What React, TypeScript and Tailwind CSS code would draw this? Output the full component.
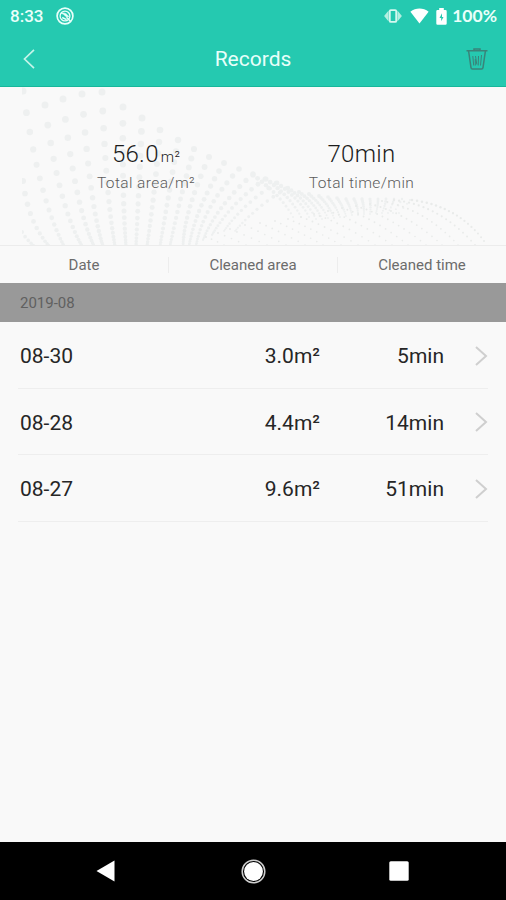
import { Fragment } from 'react';

interface CleaningRecord {
  date: string;
  area: string;
  time: string;
}

const RECORDS: CleaningRecord[] = [
  { date: '08-30', area: '3.0m²', time: '5min' },
  { date: '08-28', area: '4.4m²', time: '14min' },
  { date: '08-27', area: '9.6m²', time: '51min' },
];

// x0, y0, control x, control y, x1, y1, dot count, first radius, last radius
type Strand = [number, number, number, number, number, number, number, number, number];

const STRANDS: Strand[] = [
  [22, 145, 26, 152, 34, 159, 6, 2, 1.5],
  [23, 94, 28, 135, 49, 159, 12, 3, 1.4],
  [23, 4, 39, 112, 64, 159, 18, 3.5, 1.4],
  [45, 18, 58, 118, 82, 159, 18, 3.5, 1.4],
  [63, 12, 75, 120, 94, 159, 19, 3.5, 1.4],
  [82, 7, 90, 120, 103, 159, 20, 3.5, 1.4],
  [102, 5, 106, 110, 115, 159, 20, 3.5, 1.4],
  [123, 20, 122, 110, 126, 159, 20, 3.5, 1.4],
  [142, 31, 139, 100, 136, 159, 19, 3.5, 1.4],
  [160, 43, 155, 105, 147, 159, 19, 3.3, 1.4],
  [178, 53, 168, 112, 160, 159, 19, 3.2, 1.3],
  [194, 62, 180, 110, 170, 159, 19, 3.1, 1.2],
  [209, 70, 184, 125, 183, 159, 20, 3, 1.1],
  [224, 76, 196, 120, 189, 159, 20, 2.9, 1],
  [239, 82, 203, 120, 196, 159, 20, 2.8, 0.9],
  [253, 87, 216, 120, 203, 153, 19, 2.7, 0.9],
  [265, 92, 230, 117, 212, 148, 18, 2.5, 0.9],
  [276, 96, 243, 117, 224, 144, 16, 2.3, 0.8],
  [287, 101, 258, 118, 235, 144, 15, 2.1, 0.8],
];

const RIDGE: Strand[] = [
  [253, 88, 281, 108, 293, 130, 13, 2.6, 1],
  [266, 92, 291, 110, 301, 130, 13, 2.5, 1],
  [277, 96, 300, 112, 309, 130, 12, 2.4, 1],
  [288, 101, 307, 114, 316, 132, 12, 2.2, 1],
  [299, 105, 315, 116, 322, 132, 12, 2.1, 1],
  [309, 107, 321, 117, 328, 131, 11, 2, 0.9],
  [319, 109, 329, 118, 334, 131, 11, 1.9, 0.9],
  [328, 110, 336, 119, 340, 130, 10, 1.8, 0.9],
  [337, 111, 343, 119, 346, 129, 10, 1.8, 0.9],
  [346, 112, 350, 119, 352, 128, 9, 1.7, 0.9],
  [354, 112, 358, 119, 358, 128, 9, 1.7, 0.9],
  [362, 112, 364, 119, 364, 127, 9, 1.7, 0.9],
  [370, 112, 371, 119, 370, 127, 8, 1.6, 0.9],
  [378, 112, 378, 119, 376, 126, 8, 1.5, 0.9],
  [386, 112, 385, 119, 382, 126, 7, 1.4, 0.9],
  [394, 112, 392, 119, 388, 126, 6, 1.3, 0.9],
  [402, 112, 399, 118, 393, 126, 5, 1.2, 0.9],
  [410, 113, 406, 118, 399, 126, 4, 1.1, 0.9],
];

// Sparse arcs that run down to the lower right edge
const ARCS: Strand[] = [
  [412, 113, 458, 119, 484, 154, 19, 1.3, 1],
  [394, 113, 440, 118, 475, 158, 19, 1.2, 0.9],
  [382, 114, 425, 122, 458, 158, 17, 1.1, 0.8],
  [370, 117, 407, 126, 442, 158, 15, 1.1, 0.8],
  [356, 119, 390, 129, 426, 158, 14, 1, 0.8],
  [342, 121, 374, 131, 408, 158, 13, 1, 0.8],
  [328, 124, 357, 133, 392, 158, 12, 1, 0.8],
  [314, 127, 342, 136, 375, 158, 11, 1, 0.8],
  [301, 130, 326, 139, 358, 158, 10, 1, 0.8],
  [288, 132, 313, 142, 341, 158, 10, 0.9, 0.8],
  [275, 134, 298, 144, 323, 158, 9, 0.9, 0.8],
  [260, 136, 281, 145, 305, 158, 8, 0.9, 0.8],
  [245, 138, 264, 147, 286, 158, 7, 0.9, 0.8],
  [230, 142, 247, 149, 267, 158, 6, 0.9, 0.8],
  [218, 146, 231, 151, 246, 158, 5, 0.9, 0.8],
  [206, 150, 214, 153, 224, 158, 4, 0.9, 0.8],
];

function StrandDots({ strand, even }: { strand: Strand; even?: boolean }) {
  const [x0, y0, cx, cy, x1, y1, count, r0, r1] = strand;

  return (
    <>
      {Array.from({ length: count }, (_, i) => {
        const s = i / (count - 1);
        // dots crowd together towards the end of the strand
        const t = even ? s : 1 - Math.pow(1 - s, 1.8);
        const u = 1 - t;
        return (
          <circle
            key={i}
            cx={u * u * x0 + 2 * u * t * cx + t * t * x1}
            cy={u * u * y0 + 2 * u * t * cy + t * t * y1}
            r={r0 + (r1 - r0) * s}
          />
        );
      })}
    </>
  );
}

function DotWave() {
  return (
    <svg className="absolute inset-0 h-[158px] w-[506px]" viewBox="0 0 506 158">
      <defs>
        <clipPath id="wave-clip">
          <rect x="22" y="0" width="466" height="158" />
        </clipPath>
      </defs>
      <g clipPath="url(#wave-clip)">
        <g fill="#eef0f0">
          {STRANDS.map((strand, i) => (
            <StrandDots key={i} strand={strand} />
          ))}
        </g>
        <g fill="#eef0f0">
          {RIDGE.map((strand, i) => (
            <StrandDots key={i} strand={strand} even />
          ))}
        </g>
        <g fill="#e9ebea">
          {ARCS.map((strand, i) => (
            <StrandDots key={i} strand={strand} even />
          ))}
        </g>
      </g>
    </svg>
  );
}

function StatusBar() {
  return (
    <div className="flex h-8 items-center justify-between pr-[9px] pl-[10px] text-[#e9fffa]">
      <div className="flex items-center gap-[13px]">
        <span className="font-['Roboto',sans-serif] text-[17px] leading-none font-medium">8:33</span>
        <svg className="size-[18px]" viewBox="0 0 18 18" fill="none" stroke="currentColor">
          <circle cx="9" cy="9" r="7.9" strokeWidth="1.7" />
          <circle cx="9" cy="9" r="4.9" strokeWidth="1.3" />
          <path d="M5.2 6.2C8.2 5.4 11.2 6.8 12.6 9.8L9.8 9.4C8.8 7.8 7.2 7 5.2 6.2Z" fill="currentColor" strokeWidth="0.7" />
          <path d="M6.2 10.5 10.6 12.6M10.5 10.2l4 4" strokeWidth="1.4" />
        </svg>
      </div>
      <div className="flex items-center">
        <svg className="h-[14px] w-[18px]" viewBox="0 0 18 14">
          <path d="M4.6 1.6v10.8L.1 7Z M13.4 1.6v10.8L17.9 7Z" fill="#b4efe1" />
          <rect x="5.8" y="1.1" width="6.4" height="11.8" rx="1" fill="#25c9b0" stroke="#d5f8f0" strokeWidth="1.8" />
        </svg>
        <svg className="ml-[8px] h-[16px] w-[19px]" viewBox="0 0 19 16" fill="#fff">
          <path d="M.4 3.7C5.8-.5 13.2-.5 18.6 3.7L9.5 15.5Z" />
        </svg>
        <svg className="ml-[7px] h-[17px] w-[11px]" viewBox="0 0 11 17" fill="#fff">
          <path d="M3.2 0h4.6v2h1.700a1.200 1.200 0 0 1 1.200 1.200v12.400a1.200 1.200 0 0 1-1.200 1.200h-8A1.200 1.200 0 0 1 .3 15.600V3.200A1.200 1.200 0 0 1 1.500 2h1.700Z" />
          <path d="M6 5.200 3.500 10h1.700v3.300L7.500 8.900H6Z" fill="#25c9b0" />
        </svg>
        <span className="ml-[5px] font-['Lato',sans-serif] text-[17.500px] leading-none font-bold">100%</span>
      </div>
    </div>
  );
}

function TitleBar() {
  return (
    <div className="grid h-[54px] grid-cols-[1fr_auto_1fr] items-center">
      <button className="justify-self-start pl-[23px]" aria-label="Back">
        <svg className="h-[20px] w-[12px]" viewBox="0 0 12 20" fill="none" stroke="#c5f4e9" strokeWidth="1.700">
          <path d="M11 .8 1.500 10 11 19.200" />
        </svg>
      </button>
      <h1 className="pt-px text-[21px] leading-none text-[#e8fffa]">Records</h1>
      <button className="justify-self-end pr-[18px]" aria-label="Delete">
        <svg className="h-[22px] w-[22px]" viewBox="0 0 22 22" fill="none" stroke="#3a8379" strokeWidth="1.500">
          <path d="M.5 2.700h21M8 2.300V1h6v1.300" />
          <path d="M2.600 3 5 19.700a1.500 1.500 0 0 0 1.500 1.300h9a1.500 1.500 0 0 0 1.500-1.300L19.400 3" />
          <path d="m6.800 8 .9 9.500M9.300 17.500V11M12.500 8l-.3 9.500M15.500 7l-1 10.500M9.500 8l1.300 8.500" strokeWidth="1" />
        </svg>
      </button>
    </div>
  );
}

interface TotalProps {
  value: string;
  unit?: string;
  label: string;
}

function Total({ value, unit, label }: TotalProps) {
  return (
    <div className="flex flex-col items-center">
      <p className="h-[29px] text-[24px] leading-[29px] tracking-[0.3px] text-[#1c1c1c]">
        {value}
        {unit && <span className="ml-[2px] text-[15px] leading-none">{unit}</span>}
      </p>
      <p className="text-[15.500px] leading-[28px] font-light tracking-[0.400px] whitespace-nowrap text-[#5c5c5c]">{label}</p>
    </div>
  );
}

export default function App() {
  return (
    <div className="flex h-[900px] w-[506px] flex-col bg-[#f9f9f9] font-['Roboto',sans-serif] text-[#262626]">
      <header className="border-b border-[#17b79b] bg-[#25c9b0]">
        <StatusBar />
        <TitleBar />
      </header>

      <section className="relative h-[158px]">
        <DotWave />
        <div className="relative grid grid-cols-[292px_139px] pt-[53px] font-light">
          <Total value="56.0" unit="m²" label="Total area/m²" />
          <Total value="70min" label="Total time/min" />
        </div>
      </section>

      <div className="flex h-[38px] items-center border-t border-[#ececec] text-[15px] text-[#6c6c6c]">
        {['Date', 'Cleaned area', 'Cleaned time'].map((label, i) => (
          <Fragment key={label}>
            {i > 0 && <div className="h-4 w-px bg-[#ededed]" />}
            <div className="flex-1 pt-[2px] text-center">{label}</div>
          </Fragment>
        ))}
      </div>

      <div className="flex h-[39px] items-center bg-[#999] pt-px pl-5 text-[15px] text-[#606060]">2019-08</div>

      <ul>
        {RECORDS.map((record) => (
          <li key={record.date} className="mx-[18px] flex h-[66.500px] items-center border-b border-[#eee] pt-[2px] pl-[2px] text-[21px]">
            <span className="flex-1 pt-[2px]">{record.date}</span>
            <span className="w-[100px] pt-[2px] text-right">{record.area}</span>
            <span className="w-[124px] pt-[2px] text-right">{record.time}</span>
            <svg className="ml-[31px] h-[20px] w-[13px]" viewBox="0 0 13 20" fill="none" stroke="#cfcfcf" strokeWidth="2">
              <path d="M1 1l10 9-10 9" />
            </svg>
          </li>
        ))}
      </ul>

      <nav className="mt-auto flex h-[58px] items-center bg-black">
        <button className="ml-[96px]" aria-label="Back">
          <svg className="h-[22px] w-[19px]" viewBox="0 0 19 22" fill="#fff">
            <path d="M18.500.5v21L.5 11Z" />
          </svg>
        </button>
        <button className="ml-[126px]" aria-label="Home">
          <svg className="size-[25px]" viewBox="0 0 25 25">
            <circle cx="12.500" cy="12.500" r="11.300" fill="none" stroke="#d0d0d0" strokeWidth="1.500" />
            <circle cx="12.500" cy="12.500" r="9.400" fill="#fff" />
          </svg>
        </button>
        <button className="ml-[123px]" aria-label="Recent apps">
          <svg className="size-[20px]" viewBox="0 0 20 20" fill="#fff">
            <rect x="0.300" y="0.300" width="19.400" height="19.400" rx="1.500" />
          </svg>
        </button>
      </nav>
    </div>
  );
}
